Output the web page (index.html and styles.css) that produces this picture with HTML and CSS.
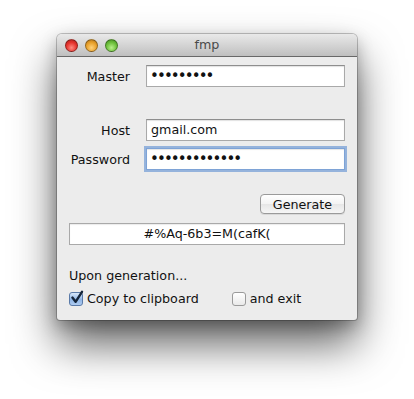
FILE: index.html
```html
<!DOCTYPE html>
<html>
<head>
<meta charset="utf-8">
<link rel="stylesheet" href="styles.css">
</head>
<body>
<div class="window">
  <div class="titlebar">
    <div class="lights">
      <span class="light red"></span>
      <span class="light orange"></span>
      <span class="light green"></span>
    </div>
    <div class="title">fmp</div>
  </div>
  <div class="content">
    <div class="row row-master">
      <label class="label">Master</label>
      <div class="field dots">•••••••••</div>
    </div>
    <div class="row row-host">
      <label class="label">Host</label>
      <div class="field">gmail.com</div>
    </div>
    <div class="row row-pass">
      <label class="label">Password</label>
      <div class="field dots focused">•••••••••••••</div>
    </div>
    <div class="actions">
      <button class="button">Generate</button>
    </div>
    <div class="output">#%Aq-6b3=M(cafK(</div>
    <div class="upon">Upon generation...</div>
    <div class="checks">
      <div class="check">
        <span class="box checked">
          <svg width="16" height="16" viewBox="0 0 16 16"><path d="M3.4 7.6 L6.6 11.8 L13 1.8" fill="none" stroke="#15253a" stroke-width="2.4" stroke-linecap="round" stroke-linejoin="round"/></svg>
        </span>
        <span>Copy to clipboard</span>
      </div>
      <div class="check check-exit">
        <span class="box"></span>
        <span>and exit</span>
      </div>
    </div>
  </div>
</div>
</body>
</html>
```
FILE: styles.css
```css
* { box-sizing: border-box; }
html, body { margin: 0; padding: 0; background: #ffffff; }
body {
  font-family: "DejaVu Sans", "Lucida Grande", sans-serif;
  font-size: 12.7px;
  color: #111;
  width: 414px;
  height: 399px;
  overflow: hidden;
}
.window {
  margin: 34px 0 0 57px;
  width: 300px;
  height: 286px;
  background: #ececec;
  border-radius: 5px 5px 3px 3px;
  box-shadow: 0 0 0 1px rgba(0,0,0,0.22), 0 24px 44px rgba(0,0,0,0.62), 0 6px 16px rgba(0,0,0,0.25);
  overflow: hidden;
  display: flex;
  flex-direction: column;
}
.titlebar {
  height: 23px;
  flex: none;
  background: linear-gradient(#e9e9e9, #d0d0d0 60%, #bfbfbf);
  border-bottom: 1px solid #686868;
  display: flex;
  align-items: center;
  position: relative;
}
.lights { display: flex; gap: 7px; padding-left: 8px; }
.light {
  width: 13px; height: 13px; border-radius: 50%;
  border: 1px solid rgba(0,0,0,0.35);
}
.red { background: radial-gradient(circle at 50% 70%, #ff8a80, #e5322c 55%, #a6201c); }
.orange { background: radial-gradient(circle at 50% 70%, #ffd27a, #e8a02a 55%, #a9701a); }
.green { background: radial-gradient(circle at 50% 70%, #b8f08a, #6cbf3a 55%, #3f8a20); }
.title {
  position: absolute; left: 0; right: 0; top: 0; bottom: 0;
  text-align: center; line-height: 22px;
  color: #4a4a4a; font-size: 12.7px;
}
.content { padding: 8px 12px 0 12px; display: flex; flex-direction: column; }
.row { display: flex; align-items: center; }
.label { width: 61px; text-align: right; margin-right: 16px; }
.field {
  flex: 1;
  height: 22px;
  background: #fff;
  border: 1px solid #a9a9a9;
  border-top-color: #8e8e8e;
  box-shadow: inset 0 1px 1px rgba(0,0,0,0.12);
  padding: 0 4px;
  line-height: 20px;
}
.dots { font-size: 15px; letter-spacing: -1.9px; line-height: 21px; padding-left: 3px; }
.focused {
  border-color: #7ea3d6;
  box-shadow: 0 0 0 2px rgba(120,160,215,0.75), inset 0 1px 1px rgba(0,0,0,0.1);
}
.row-host { margin-top: 32px; }
.row-pass { margin-top: 7px; }
.actions { display: flex; justify-content: flex-end; margin-top: 24px; }
.button {
  width: 85px; height: 20px;
  font-family: inherit; font-size: 12.7px; color: #111;
  border: 1px solid #9a9a9a;
  border-radius: 4px;
  background: linear-gradient(#ffffff, #f3f3f3 50%, #e6e6e6 51%, #f6f6f6);
  box-shadow: 0 1px 0 rgba(0,0,0,0.08);
  padding: 0;
}
.output {
  margin-top: 9px;
  height: 22px;
  background: #fff;
  border: 1px solid #a9a9a9;
  box-shadow: inset 0 1px 1px rgba(0,0,0,0.08);
  text-align: center;
  line-height: 20px;
}
.upon { margin-top: 23px; line-height: 16px; }
.checks { display: flex; margin-top: 7px; align-items: center; }
.check { display: flex; align-items: center; gap: 4px; }
.check-exit { margin-left: 33px; }
.box {
  width: 14px; height: 14px; border-radius: 3px;
  border: 1px solid #9a9a9a;
  background: linear-gradient(#ffffff, #e9e9e9);
  display: block; position: relative;
}
.box.checked {
  border-color: #5a7aa8;
  background: linear-gradient(#d8e8fa, #8fb5e6 55%, #aecbf0);
}
.box svg { position: absolute; left: -1px; top: -3px; }
```
